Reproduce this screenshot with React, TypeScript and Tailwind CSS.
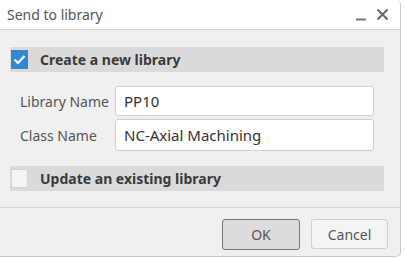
import React from 'react';

const font = { fontFamily: '"Noto Sans", "Open Sans", sans-serif' };

const Check = ({ checked }: { checked: boolean }) =>
  checked ? (
    <div className="flex h-[19px] w-[17px] items-center justify-center bg-[#3088d4]">
      <svg width="13" height="11" viewBox="0 0 13 11">
        <polyline points="1.5,5.5 5,9 11.5,2" fill="none" stroke="#fff" strokeWidth="2.2" />
      </svg>
    </div>
  ) : (
    <div className="h-[19px] w-[17px] border border-[#d4d4d4] bg-[#f4f4f4]" />
  );

const Section = ({ label, checked }: { label: string; checked: boolean }) => (
  <div className="flex h-[25px] w-[374px] items-center bg-[#dadada] pl-px">
    <Check checked={checked} />
    <span className="ml-[12px] text-[14px] font-bold text-[#3a3a3a]">{label}</span>
  </div>
);

const Field = ({ label, value, h }: { label: string; value: string; h: string }) => (
  <div className="flex items-center">
    <span className="w-[105px] shrink-0 pl-[10px] text-[14px] whitespace-nowrap text-[#555]">{label}</span>
    <div
      className={`flex ${h} w-[259px] shrink-0 items-center rounded-[3px] border border-[#cfcfcf] bg-white pl-[8px] text-[15px] text-[#333]`}
    >
      {value}
    </div>
  </div>
);

export default function App() {
  return (
    <div className="h-[258px] w-[405px] bg-white" style={font}>
      <div className="flex h-[257px] w-[401px] flex-col overflow-hidden rounded-r-[5px] border-r border-b border-[#c9c9c9] bg-[#f0f0f0]">
        <div className="flex h-[30px] shrink-0 items-center justify-between border-b border-[#d2d2d2] bg-white pr-[11px] pl-[7px]">
          <span className="text-[14px] text-[#555]">Send to library</span>
          <div className="flex items-center gap-[9px]">
            <svg width="12" height="12" viewBox="0 0 12 12">
              <line x1="1" y1="10.5" x2="11" y2="10.5" stroke="#777" strokeWidth="1.8" />
            </svg>
            <svg width="13" height="13" viewBox="0 0 13 13">
              <path d="M1.5 1.5 L11.5 11.5 M11.5 1.5 L1.5 11.5" stroke="#666" strokeWidth="2" />
            </svg>
          </div>
        </div>
        <div className="flex shrink-0 flex-col border-b border-[#d4d4d4] px-[10px] pt-[17px] pb-[16px]">
          <Section label="Create a new library" checked />
          <div className="mt-[14px] flex flex-col gap-[3px]">
            <Field label="Library Name" value="PP10" h="h-[30px]" />
            <Field label="Class Name" value="NC-Axial Machining" h="h-[32px]" />
          </div>
          <div className="mt-[15px]">
            <Section label="Update an existing library" checked={false} />
          </div>
        </div>
        <div className="flex justify-end gap-[11px] pt-[11px] pr-[12px]">
          <button className="h-[31px] w-[78px] rounded-[3px] border border-[#767676] bg-[#dcdcdc] text-[14px] text-[#555]">
            OK
          </button>
          <button className="h-[30px] w-[77px] rounded-[3px] border border-[#cfcfcf] bg-[#f4f4f4] text-[14px] text-[#555]">
            Cancel
          </button>
        </div>
      </div>
    </div>
  );
}
